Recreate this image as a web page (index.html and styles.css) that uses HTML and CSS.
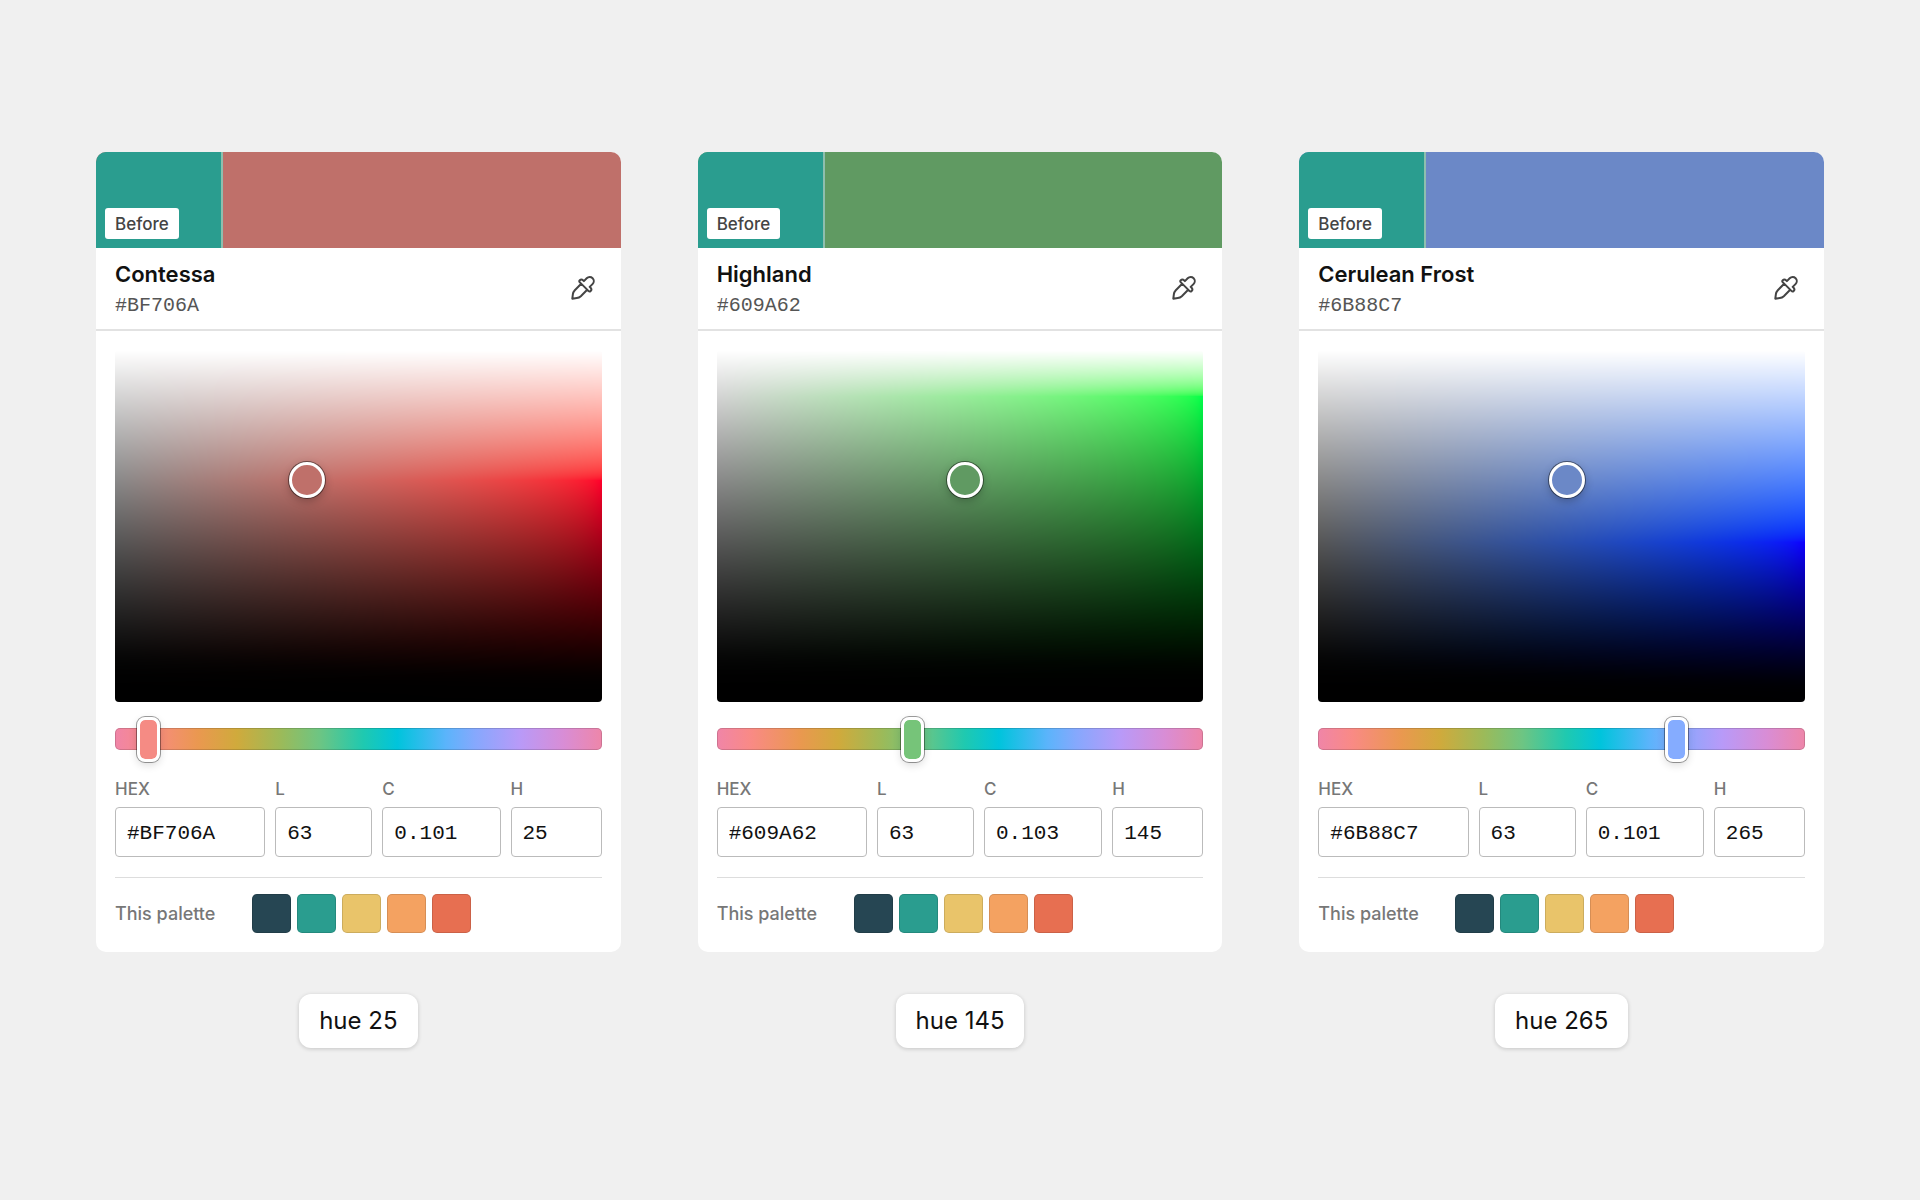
FILE: index.html
```html
<!DOCTYPE html>
<html lang="en">
<head>
<meta charset="utf-8">
<meta name="viewport" content="width=device-width, initial-scale=1">
<title>OKLCH color picker</title>
<link rel="stylesheet" href="styles.css">
</head>
<body>
<svg class="sprite" aria-hidden="true">
  <symbol id="pipette" viewBox="0 0 24 24">
    <path d="M10.200 7.800 3.800 14.200c-1.300 1.400-1.700 2.600-1.900 4L1.300 22.700l4.500-.6c1.400-.2 2.600-.6 4-1.900L16.200 13.800M8.900 6.400c-.8-.8-.8-1.500-.1-2.200.9-.9 2.300-.9 3.200 0l.9.900 2.800-2.800c1.700-1.700 4.300-1.700 5.900-.1s1.600 4.200-.1 5.900l-2.800 2.800.9.900c.9.900.9 2.300 0 3.200-.7.700-1.400.7-2.200-.1z"/>
  </symbol>
</svg>
<main class="board">
  <section class="column">
    <article class="card" style="--hue: 25; --color: #bf706a">
      <div class="preview"><div class="before"><span class="badge">Before</span></div></div>
      <header class="head">
        <div class="title"><h2 class="name">Contessa</h2><p class="code">#BF706A</p></div>
        <button class="pick" type="button" aria-label="Pick a color"><svg><use href="#pipette"/></svg></button>
      </header>
      <div class="body">
        <div class="plane"><canvas data-hue="25"></canvas><button class="handle" type="button" aria-label="Lightness and chroma" style="left: 39.5%; top: 37%"></button></div>
        <div class="track"><input class="hue" type="range" min="0" max="360" value="25" aria-label="Hue"></div>
        <div class="fields">
          <label class="field">HEX<input type="text" value="#BF706A"></label>
          <label class="field">L<input type="text" value="63"></label>
          <label class="field">C<input type="text" value="0.101"></label>
          <label class="field">H<input type="text" value="25"></label>
        </div>
        <div class="palette">
          <span class="palette-name">This palette</span>
          <button class="chip navy" type="button" aria-label="#264653"></button>
          <button class="chip teal" type="button" aria-label="#2A9D8F"></button>
          <button class="chip sand" type="button" aria-label="#E9C46A"></button>
          <button class="chip orange" type="button" aria-label="#F4A261"></button>
          <button class="chip coral" type="button" aria-label="#E76F51"></button>
        </div>
      </div>
    </article>
    <p class="caption">hue 25</p>
  </section>

  <section class="column">
    <article class="card" style="--hue: 145; --color: #609a62">
      <div class="preview"><div class="before"><span class="badge">Before</span></div></div>
      <header class="head">
        <div class="title"><h2 class="name">Highland</h2><p class="code">#609A62</p></div>
        <button class="pick" type="button" aria-label="Pick a color"><svg><use href="#pipette"/></svg></button>
      </header>
      <div class="body">
        <div class="plane"><canvas data-hue="145"></canvas><button class="handle" type="button" aria-label="Lightness and chroma" style="left: 51%; top: 37%"></button></div>
        <div class="track"><input class="hue" type="range" min="0" max="360" value="145" aria-label="Hue"></div>
        <div class="fields">
          <label class="field">HEX<input type="text" value="#609A62"></label>
          <label class="field">L<input type="text" value="63"></label>
          <label class="field">C<input type="text" value="0.103"></label>
          <label class="field">H<input type="text" value="145"></label>
        </div>
        <div class="palette">
          <span class="palette-name">This palette</span>
          <button class="chip navy" type="button" aria-label="#264653"></button>
          <button class="chip teal" type="button" aria-label="#2A9D8F"></button>
          <button class="chip sand" type="button" aria-label="#E9C46A"></button>
          <button class="chip orange" type="button" aria-label="#F4A261"></button>
          <button class="chip coral" type="button" aria-label="#E76F51"></button>
        </div>
      </div>
    </article>
    <p class="caption">hue 145</p>
  </section>

  <section class="column">
    <article class="card" style="--hue: 265; --color: #6b88c7">
      <div class="preview"><div class="before"><span class="badge">Before</span></div></div>
      <header class="head">
        <div class="title"><h2 class="name">Cerulean Frost</h2><p class="code">#6B88C7</p></div>
        <button class="pick" type="button" aria-label="Pick a color"><svg><use href="#pipette"/></svg></button>
      </header>
      <div class="body">
        <div class="plane"><canvas data-hue="265"></canvas><button class="handle" type="button" aria-label="Lightness and chroma" style="left: 51%; top: 37%"></button></div>
        <div class="track"><input class="hue" type="range" min="0" max="360" value="265" aria-label="Hue"></div>
        <div class="fields">
          <label class="field">HEX<input type="text" value="#6B88C7"></label>
          <label class="field">L<input type="text" value="63"></label>
          <label class="field">C<input type="text" value="0.101"></label>
          <label class="field">H<input type="text" value="265"></label>
        </div>
        <div class="palette">
          <span class="palette-name">This palette</span>
          <button class="chip navy" type="button" aria-label="#264653"></button>
          <button class="chip teal" type="button" aria-label="#2A9D8F"></button>
          <button class="chip sand" type="button" aria-label="#E9C46A"></button>
          <button class="chip orange" type="button" aria-label="#F4A261"></button>
          <button class="chip coral" type="button" aria-label="#E76F51"></button>
        </div>
      </div>
    </article>
    <p class="caption">hue 265</p>
  </section>
</main>
<script src="plane.js"></script>
</body>
</html>
```
FILE: styles.css
```css
* { box-sizing: border-box; }

body {
  margin: 0;
  background: #f0f0f0;
  color: #111;
  font-family: Inter, "Liberation Sans", sans-serif;
  font-weight: 500;
}

h2, p { margin: 0; }
button { padding: 0; border: 0; background: none; cursor: pointer; }
.sprite { display: none; }

.board {
  min-height: 100vh;
  padding: 48px 5%;
  display: grid;
  grid-template-columns: repeat(3, minmax(0, 1fr));
  gap: 77px;
  align-content: center;
}

.column {
  display: flex;
  flex-direction: column;
  align-items: center;
  gap: 42px;
}

.card {
  width: 100%;
  background: #fff;
  border-radius: 10px;
  overflow: hidden;
}

.preview { height: 96px; background: var(--color); }

.before {
  width: 127px;
  height: 100%;
  padding: 9px;
  display: flex;
  align-items: flex-end;
  background: #2a9d8f;
  border-right: 2px solid #8ebfae;
}

.badge {
  padding: 1px 10px 0;
  border-radius: 3px;
  background: #fff;
  color: #444;
  font-size: 17px;
  line-height: 30px;
}

.head {
  height: 83px;
  padding: 0 26px 2px 19px;
  display: flex;
  align-items: center;
  justify-content: space-between;
  border-bottom: 2px solid #e2e2e2;
}

.title {
  display: grid;
  gap: 2px;
  padding-top: 5px;
}

.name { font-size: 22px; line-height: 30px; font-weight: 600; }

.code {
  color: #555;
  font: 400 20px/30px "Liberation Mono", monospace;
}

.pick { color: #444; }

.pick svg {
  display: block;
  width: 24px;
  height: 24px;
  fill: none;
  stroke: currentColor;
  stroke-width: 2;
  stroke-linecap: round;
  stroke-linejoin: round;
}

.body { padding: 19px; }

.plane { position: relative; height: 352px; }

.plane canvas {
  display: block;
  width: 100%;
  height: 100%;
  border-radius: 4px;
}

.handle {
  position: absolute;
  width: 36px;
  height: 36px;
  border: 3px solid #fff;
  border-radius: 50%;
  background: var(--color);
  box-shadow: 0 0 0 1px rgb(0 0 0 / 45%), 0 3px 8px rgb(0 0 0 / 25%);
  transform: translate(-50%, -50%);
}

.track {
  height: 22px;
  margin: 26px 0 28px;
  display: flex;
  align-items: center;
  border-radius: 5px;
  background: linear-gradient(to right,
    #f085a8, #f98a85 7%, #ea9850 17%, #d0aa3c 25%,
    #9cba59 34%, #6dc583 42%, #1fc9b0 51%, #00c4dc 58%,
    #5bb4fb 68%, #86a8fd 74%, #b89af8 83%, #d88dd6 92%, #ee86a9);
  box-shadow: inset 0 0 0 1px rgb(0 0 0 / 14%);
}

.hue {
  flex: 1;
  height: 46px;
  margin: 0 -12px;
  appearance: none;
  background: transparent;
}

.hue::-webkit-slider-thumb {
  appearance: none;
  width: 23px;
  height: 45px;
  border: 3px solid #fff;
  border-radius: 8px;
  background: oklch(.75 .13 var(--hue)) padding-box;
  box-shadow: 0 0 0 1px rgb(0 0 0 / 38%), 0 3px 8px rgb(0 0 0 / 14%);
}

.fields {
  display: grid;
  grid-template-columns: 150fr 97fr 118fr 91fr;
  gap: 10px;
}

.field {
  color: #777;
  font-size: 17px;
  line-height: 22px;
}

.field input {
  display: block;
  width: 100%;
  height: 50px;
  margin-top: 7px;
  padding: 2px 10px 0 11px;
  border: 1px solid #bbb;
  border-radius: 4px;
  background: #fff;
  color: #111;
  font: 400 21px "Liberation Mono", monospace;
}

.palette {
  margin-top: 20px;
  padding-top: 16px;
  display: flex;
  align-items: center;
  gap: 6px;
  border-top: 1px solid #ddd;
}

.palette-name { width: 131px; color: #777; font-size: 18px; }

.chip {
  width: 39px;
  height: 39px;
  border-radius: 5px;
  box-shadow: inset 0 0 0 1px rgb(0 0 0 / 12%);
}

.navy { background: #264653; }
.teal { background: #2a9d8f; }
.sand { background: #e9c46a; }
.orange { background: #f4a261; }
.coral { background: #e76f51; }

.caption {
  padding: 0 20px;
  border-radius: 12px;
  background: #fff;
  font-size: 24px;
  font-weight: 400;
  line-height: 54px;
  box-shadow: 0 1px 4px rgb(0 0 0 / 18%);
}
```
FILE: plane.js
```js
// Paints the OKLCH plane of one hue: lightness runs from top to bottom,
// chroma from zero to the most that sRGB can show at that lightness.
function toLinear(l, c, hue) {
  const a = c * Math.cos(hue);
  const b = c * Math.sin(hue);
  const x = (l + 0.3963377774 * a + 0.2158037573 * b) ** 3;
  const y = (l - 0.1055613458 * a - 0.0638541728 * b) ** 3;
  const z = (l - 0.0894841775 * a - 1.291485548 * b) ** 3;
  return [
    4.0767416621 * x - 3.3077115913 * y + 0.2309699292 * z,
    -1.2684380046 * x + 2.6097574011 * y - 0.3413193965 * z,
    -0.0041960863 * x - 0.7034186147 * y + 1.707614701 * z,
  ];
}

function maxChroma(l, hue) {
  let low = 0;
  let high = 0.4;
  for (let i = 0; i < 20; i++) {
    const mid = (low + high) / 2;
    const inside = toLinear(l, mid, hue).every((v) => v >= -0.0001 && v <= 1.0001);
    if (inside) low = mid;
    else high = mid;
  }
  return low;
}

function encode(v) {
  const s = v <= 0.0031308 ? 12.92 * v : 1.055 * v ** (1 / 2.4) - 0.055;
  return Math.round(255 * Math.min(1, Math.max(0, s)));
}

for (const canvas of document.querySelectorAll("canvas[data-hue]")) {
  const width = (canvas.width = canvas.clientWidth);
  const height = (canvas.height = canvas.clientHeight);
  const hue = (Number(canvas.dataset.hue) * Math.PI) / 180;
  const context = canvas.getContext("2d");
  const image = context.createImageData(width, height);
  for (let row = 0; row < height; row++) {
    const l = 1 - row / (height - 1);
    const top = maxChroma(l, hue);
    for (let col = 0; col < width; col++) {
      const [r, g, b] = toLinear(l, (top * col) / (width - 1), hue).map(encode);
      image.data.set([r, g, b, 255], (row * width + col) * 4);
    }
  }
  context.putImageData(image, 0, 0);
}
```
